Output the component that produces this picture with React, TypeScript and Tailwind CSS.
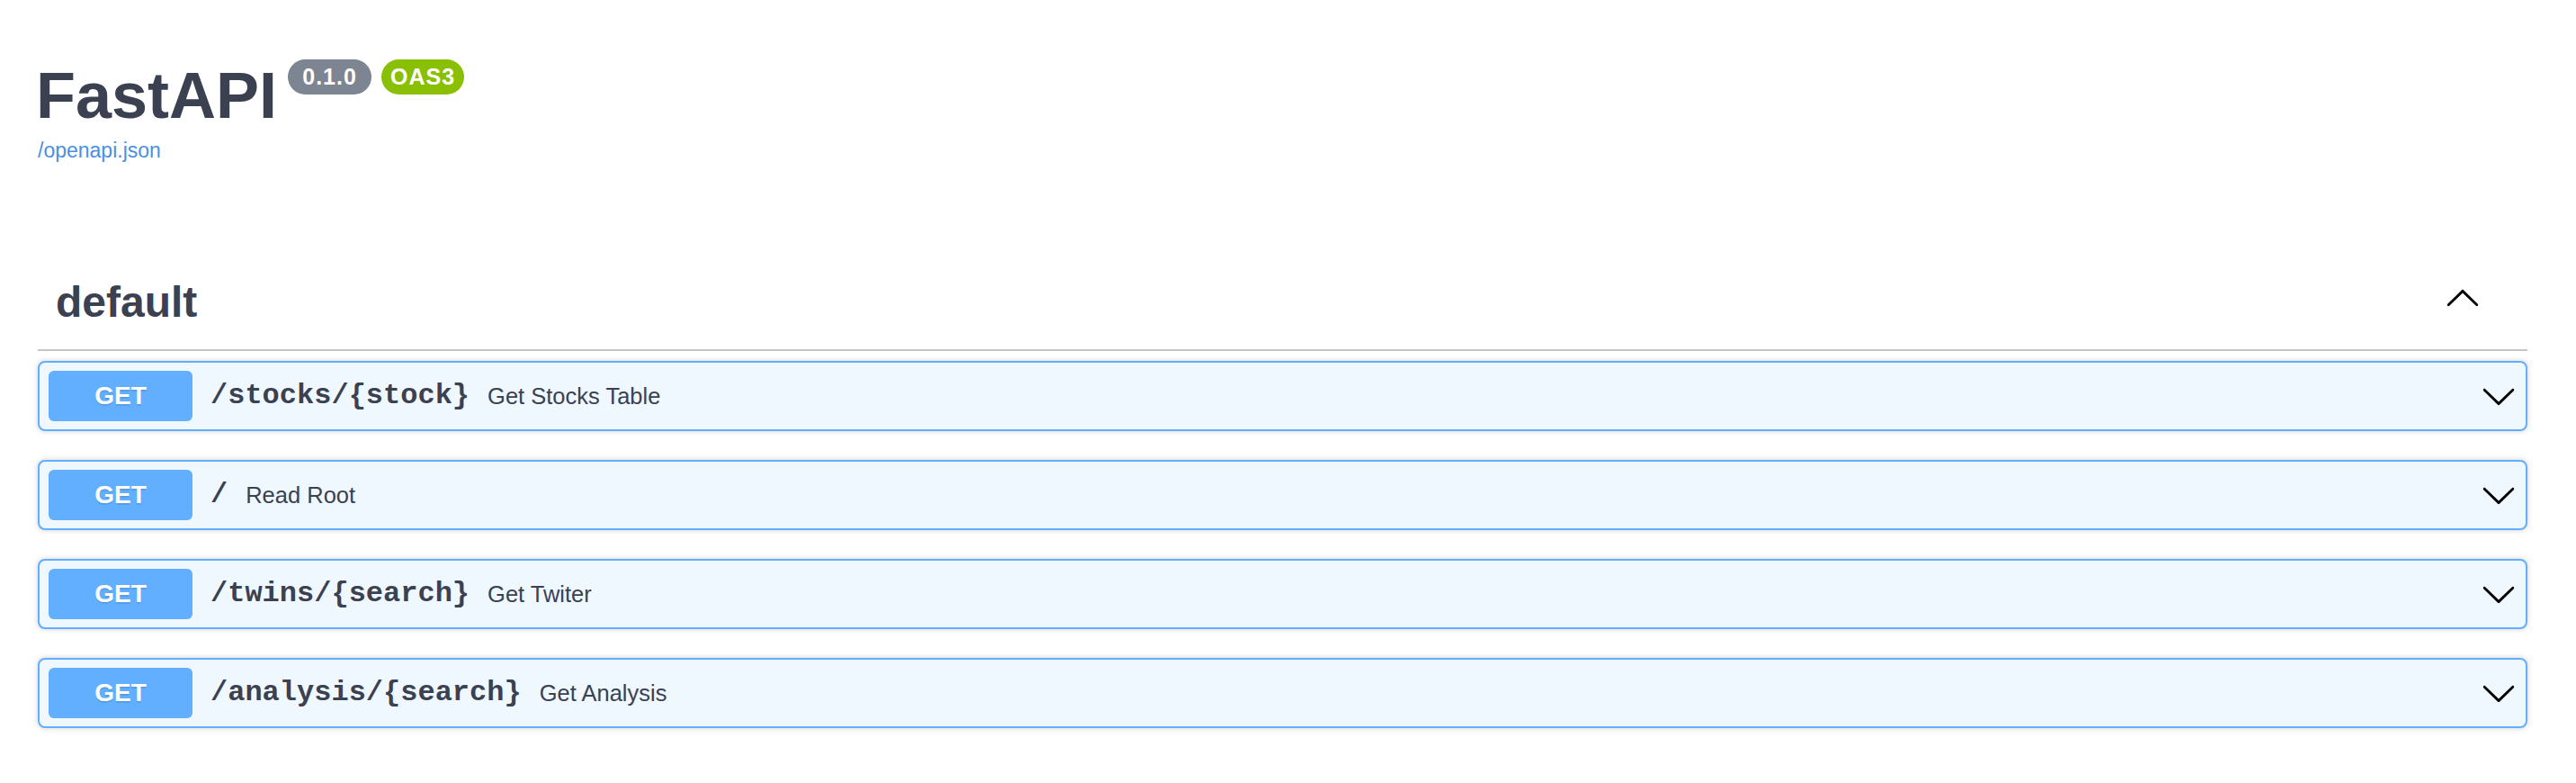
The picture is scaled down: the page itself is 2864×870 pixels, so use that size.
const operations = [
  { path: '/stocks/{stock}', summary: 'Get Stocks Table' },
  { path: '/', summary: 'Read Root' },
  { path: '/twins/{search}', summary: 'Get Twiter' },
  { path: '/analysis/{search}', summary: 'Get Analysis' },
];

function Arrow({ className }: { className?: string }) {
  return (
    <svg width="40" height="40" viewBox="0 0 20 20" className={className}>
      <path
        fill="#000"
        d="M17.418 6.109c.272-.268.709-.268.979 0s.271.701 0 .969l-7.908 7.83c-.27.268-.707.268-.979 0l-7.908-7.83c-.27-.268-.27-.701 0-.969.271-.268.709-.268.979 0L10 13.25l7.418-7.141z"
      />
    </svg>
  );
}

export default function App() {
  return (
    <div className="min-h-screen bg-white pl-[42px] pr-[54px] font-['Liberation_Sans',Arial,sans-serif] text-[#3b4151]">
      {/* info */}
      <div className="flex items-start pt-[70px]">
        <h2 className="-ml-[2px] text-[72px] font-bold leading-[72px]">FastAPI</h2>
        <div className="-mt-[4px] ml-[12px] flex gap-[11px]">
          <span className="flex h-[39px] w-[93px] items-center justify-center rounded-full bg-[#7d8492] text-[25px] font-bold tracking-[1px] text-white">
            0.1.0
          </span>
          <span className="flex h-[39px] w-[92px] items-center justify-center rounded-full bg-[#89bf04] text-[25px] font-bold tracking-[1px] text-white">
            OAS3
          </span>
        </div>
      </div>
      <a href="#" className="mt-[11px] block w-fit text-[23px] leading-[28px] text-[#4990e2]">
        /openapi.json
      </a>

      {/* tag */}
      <div className="mt-[111px] flex items-center justify-between border-b-2 border-[#c4c6cb] pb-[28px] pl-[20px] pr-[52px] pt-[20px]">
        <h3 className="text-[48px] font-bold leading-[48px]">default</h3>
        <Arrow className="-mt-[8px] rotate-180" />
      </div>

      <div className="mt-[11px] flex flex-col gap-[32px]">
        {operations.map((op) => (
          <div
            key={op.path}
            className="flex h-[78px] items-center rounded-[8px] border-2 border-[#61affe] bg-[#eff7ff] px-[10px] shadow-[0_0_6px_rgba(0,0,0,0.19)]"
          >
            <span className="flex h-[56px] w-[160px] items-center justify-center rounded-[6px] bg-[#61affe] text-[28px] font-bold text-white [text-shadow:0_2px_0_rgba(0,0,0,0.1)]">
              GET
            </span>
            <span className="px-[20px] font-['Liberation_Mono',monospace] text-[32px] font-bold">
              {op.path}
            </span>
            <span className="text-[25.5px]">{op.summary}</span>
            <Arrow className="ml-auto" />
          </div>
        ))}
      </div>
    </div>
  );
}
